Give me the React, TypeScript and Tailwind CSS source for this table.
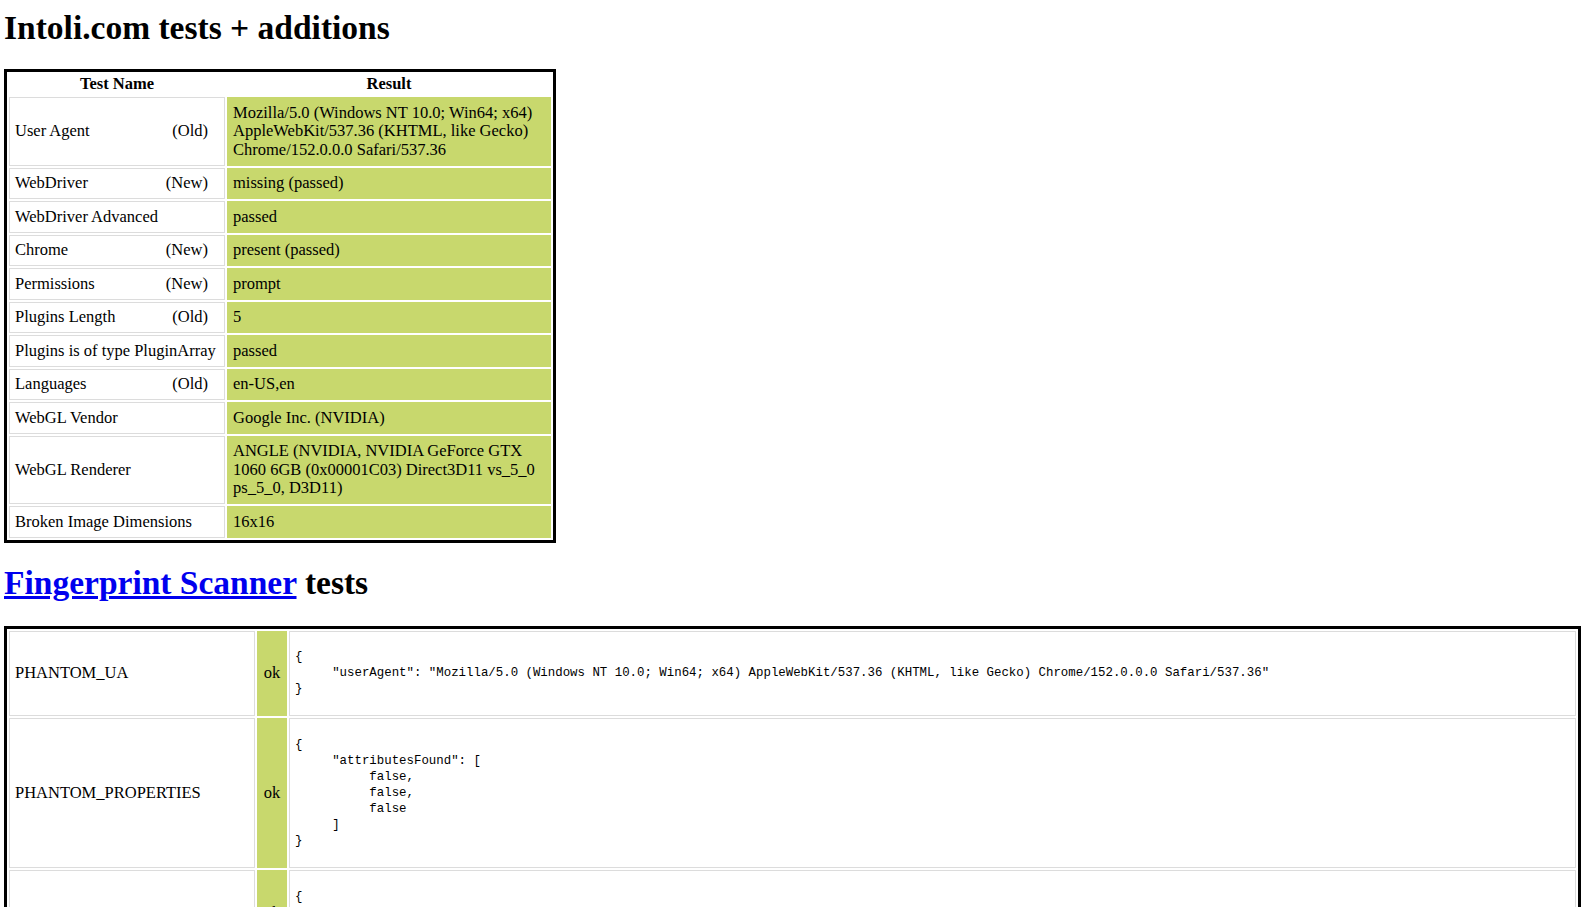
interface IntoliRow {
  name: string
  tag?: string
  result: string
}

interface ScannerRow {
  name: string
  status: string
  json: string
}

const intoliRows: IntoliRow[] = [
  {
    name: "User Agent",
    tag: "(Old)",
    result:
      "Mozilla/5.0 (Windows NT 10.0; Win64; x64) AppleWebKit/537.36 (KHTML, like Gecko) Chrome/152.0.0.0 Safari/537.36",
  },
  { name: "WebDriver", tag: "(New)", result: "missing (passed)" },
  { name: "WebDriver Advanced", result: "passed" },
  { name: "Chrome", tag: "(New)", result: "present (passed)" },
  { name: "Permissions", tag: "(New)", result: "prompt" },
  { name: "Plugins Length", tag: "(Old)", result: "5" },
  { name: "Plugins is of type PluginArray", result: "passed" },
  { name: "Languages", tag: "(Old)", result: "en-US,en" },
  { name: "WebGL Vendor", result: "Google Inc. (NVIDIA)" },
  {
    name: "WebGL Renderer",
    result: "ANGLE (NVIDIA, NVIDIA GeForce GTX 1060 6GB (0x00001C03) Direct3D11 vs_5_0 ps_5_0, D3D11)",
  },
  { name: "Broken Image Dimensions", result: "16x16" },
]

const scannerRows: ScannerRow[] = [
  {
    name: "PHANTOM_UA",
    status: "ok",
    json: `{
     "userAgent": "Mozilla/5.0 (Windows NT 10.0; Win64; x64) AppleWebKit/537.36 (KHTML, like Gecko) Chrome/152.0.0.0 Safari/537.36"
}`,
  },
  {
    name: "PHANTOM_PROPERTIES",
    status: "ok",
    json: `{
     "attributesFound": [
          false,
          false,
          false
     ]
}`,
  },
  {
    name: "PHANTOM_ETSL",
    status: "ok",
    json: `{
     "errorStackTrace": []
}`,
  },
]

export default function App() {
  return (
    <div className="min-h-screen bg-white px-[4px] text-black font-['Liberation_Serif','Times_New_Roman',serif]">
      <h1 className="mt-[9px] mb-[22px] text-[33.5px] font-bold leading-[38px]">Intoli.com tests + additions</h1>

      <table className="w-[552px] table-fixed border-separate border-spacing-[2px] border-[3px] border-black text-[16.5px] leading-[18.5px]">
        <thead>
          <tr>
            <th className="w-[216px] h-[21px] p-0 font-bold">Test Name</th>
            <th className="w-[324px] h-[21px] p-0 font-bold">Result</th>
          </tr>
        </thead>
        <tbody>
          {intoliRows.map((row) => (
            <tr key={row.name}>
              <td className="border border-[#dcdcdc] px-[5px] py-[5.5px] align-middle">
                <div className="flex justify-between whitespace-nowrap pr-[11px]">
                  <span>{row.name}</span>
                  {row.tag && <span>{row.tag}</span>}
                </div>
              </td>
              <td className="border border-transparent bg-[#c8d86d] px-[5px] py-[5.5px] align-middle">{row.result}</td>
            </tr>
          ))}
        </tbody>
      </table>

      <h2 className="mt-[21px] mb-[24px] text-[33.5px] font-bold leading-[38px]">
        <a href="#" className="text-[#0000ee] underline">
          Fingerprint Scanner
        </a>{" "}
        tests
      </h2>

      <table className="w-[1577px] table-fixed border-separate border-spacing-[2px] border-[3px] border-black text-[16.5px] leading-[18.5px]">
        <colgroup>
          <col className="w-[246px]" />
          <col className="w-[30px]" />
          <col />
        </colgroup>
        <tbody>
          {scannerRows.map((row) => (
            <tr key={row.name}>
              <td className="border border-[#dcdcdc] px-[5px] py-[5.5px] align-middle">{row.name}</td>
              <td className="border border-transparent bg-[#c8d86d] px-0 py-[5.5px] text-center align-middle">
                {row.status}
              </td>
              <td className="border border-[#dcdcdc] px-[5px] py-[5.5px] align-middle">
                <pre className="my-[12.4px] font-['Liberation_Mono','Courier_New',monospace] text-[12.4px] leading-[16px]">
                  {row.json}
                </pre>
              </td>
            </tr>
          ))}
        </tbody>
      </table>
    </div>
  )
}
